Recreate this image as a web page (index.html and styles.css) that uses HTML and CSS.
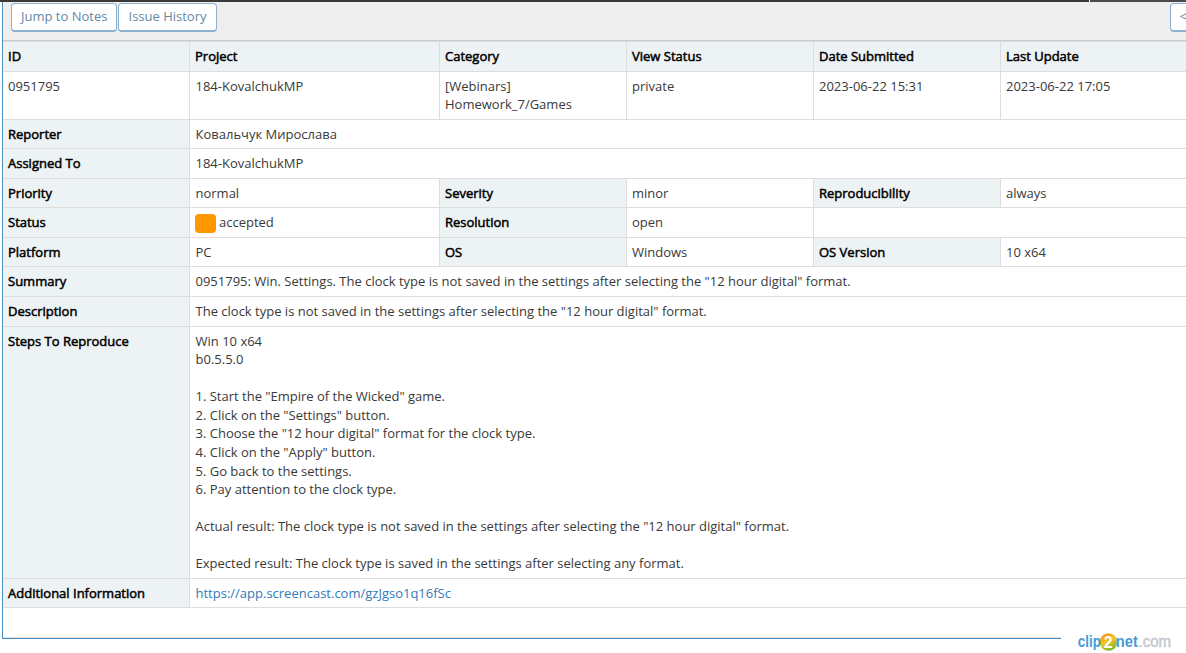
FILE: index.html
```html
<!DOCTYPE html>
<html lang="en">
<head>
<meta charset="utf-8">
<title>0951795</title>
<link rel="stylesheet" href="styles.css">
</head>
<body>
<div class="topline"><span class="topline-left"></span><span class="topline-right"></span></div>
<main class="widget">
  <div class="toolbar">
    <a class="btn">Jump to Notes</a>
    <a class="btn">Issue History</a>
    <a class="btn btn-last">&lt;</a>
  </div>
  <table class="issue">
    <colgroup><col class="c1"><col class="c2"><col class="c3"><col class="c3"><col class="c3"><col class="c3"></colgroup>
    <tr class="h31"><th>ID</th><th>Project</th><th>Category</th><th>View Status</th><th>Date Submitted</th><th>Last Update</th></tr>
    <tr class="h48"><td>0951795</td><td>184-KovalchukMP</td><td>[Webinars] Homework_7/Games</td><td>private</td><td>2023-06-22 15:31</td><td>2023-06-22 17:05</td></tr>
    <tr class="h29"><th>Reporter</th><td colspan="5">Ковальчук Мирослава</td></tr>
    <tr class="h30"><th>Assigned To</th><td colspan="5">184-KovalchukMP</td></tr>
    <tr class="h29"><th>Priority</th><td>normal</td><th>Severity</th><td>minor</td><th>Reproducibility</th><td>always</td></tr>
    <tr class="h30"><th>Status</th><td><span class="status"></span><span>accepted</span></td><th>Resolution</th><td>open</td><td colspan="2"></td></tr>
    <tr class="h29"><th>Platform</th><td>PC</td><th>OS</th><td>Windows</td><th>OS Version</th><td>10 x64</td></tr>
    <tr class="h30"><th>Summary</th><td colspan="5">0951795: Win. Settings. The clock type is not saved in the settings after selecting the "12 hour digital" format.</td></tr>
    <tr class="h30"><th>Description</th><td colspan="5">The clock type is not saved in the settings after selecting the "12 hour digital" format.</td></tr>
    <tr class="h252"><th>Steps To Reproduce</th><td colspan="5">Win 10 x64<br>b0.5.5.0<br><br>1. Start the "Empire of the Wicked" game.<br>2. Click on the "Settings" button.<br>3. Choose the "12 hour digital" format for the clock type.<br>4. Click on the "Apply" button.<br>5. Go back to the settings.<br>6. Pay attention to the clock type.<br><br>Actual result: The clock type is not saved in the settings after selecting the "12 hour digital" format.<br><br>Expected result: The clock type is saved in the settings after selecting any format.</td></tr>
    <tr class="h29"><th>Additional Information</th><td colspan="5"><a class="link">https://app.screencast.com/gzJgso1q16fSc</a></td></tr>
  </table>
  <div class="foot"></div>
</main>
<div class="watermark">
  <svg width="96" height="22" viewBox="0 0 96 22">
    <defs>
      <linearGradient id="ball" x1="0.1" y1="0" x2="0.6" y2="1">
        <stop offset="0" stop-color="#f08a1c"/><stop offset="0.5" stop-color="#f5c61c"/><stop offset="1" stop-color="#6dbb2c"/>
      </linearGradient>
    </defs>
    <circle cx="31.5" cy="11" r="8.8" fill="url(#ball)"/>
    <text class="wm-blue" x="0.8" y="16.3" textLength="23" lengthAdjust="spacingAndGlyphs">clip</text>
    <text class="wm-two" x="26.8" y="16.8">2</text>
    <text class="wm-blue" x="38.8" y="16.3" textLength="22" lengthAdjust="spacingAndGlyphs">net</text>
    <text class="wm-grey" x="61.5" y="16.3" textLength="32.5" lengthAdjust="spacingAndGlyphs">.com</text>
  </svg>
</div>
</body>
</html>
```
FILE: styles.css
```css
* { box-sizing: border-box; }
body {
  margin: 0;
  height: 653px;
  overflow: hidden;
  position: relative;
  background: #fff;
  color: #393939;
  font: 13px/18.57px "Open Sans", sans-serif;
}
.topline { display: flex; gap: 1px; height: 2px; }
.topline-left { width: 1089px; background: #393939; }
.topline-right { flex: 1; background: #4c4a49; }
.widget {
  width: 1200px;
  height: 637px;
  margin-left: 2px;
  border-left: 1px solid #4a90c2;
}
.toolbar {
  display: flex;
  gap: 1px;
  height: 39px;
  padding: 1px 0 0 8px;
  background: #eee;
  border-bottom: 1px solid #ccc;
}
.btn {
  height: 29px;
  padding: 3px 9px 0;
  border: 1px solid #8cb1d3;
  border-bottom-width: 2px;
  border-radius: 4px;
  background: #fff;
  color: #6688a6;
  white-space: nowrap;
}
.btn:nth-child(1) { width: 106px; }
.btn:nth-child(2) { width: 99px; padding-left: 9.5px; }
.btn-last { width: 40px; margin-left: 952px; flex-shrink: 0; }
.issue {
  width: 1184px;
  table-layout: fixed;
  border-collapse: separate;
  border-spacing: 0;
}
.c1 { width: 187px; }
.c2 { width: 250px; }
.c3 { width: 187px; }
.issue th, .issue td {
  padding: 4.6px 5px 0;
  border-right: 1px solid #ddd;
  border-bottom: 1px solid #ddd;
  text-align: left;
  vertical-align: top;
}
.issue td:nth-child(2) { padding-left: 5.5px; }
.issue th {
  background: #edf2f4;
  color: #000;
  font-weight: 400;
  -webkit-text-stroke: 0.5px #000;
}
.issue .h31 th { padding-top: 6px; box-shadow: inset 0 1px #ddd; }
.issue tr > :last-child { border-right: 0; }
.h29 { height: 29px; }
.h30 { height: 30px; }
.h31 { height: 31px; }
.h48 { height: 48px; }
.h252 { height: 252px; }
.status {
  float: left;
  width: 21px;
  height: 19px;
  margin: 1px 3px 0 -0.5px;
  border-radius: 4px;
  background: #ff9800;
}
.link { color: #337ab7; }
.foot {
  width: 1058px;
  height: 31px;
  border-bottom: 1px solid #4a90c2;
  box-shadow: inset 0 -1px #ddd;
}
.watermark {
  position: absolute;
  left: 1077px;
  top: 631px;
  font-family: "Liberation Sans", sans-serif;
  line-height: 0;
}
.wm-blue { fill: #459bd8; font-size: 17px; font-weight: 700; }
.wm-two { fill: #fff; font-size: 16px; font-weight: 700; }
.wm-grey { fill: #c6c6cf; stroke: #c6c6cf; stroke-width: 0.5px; font-size: 17px; }
```
